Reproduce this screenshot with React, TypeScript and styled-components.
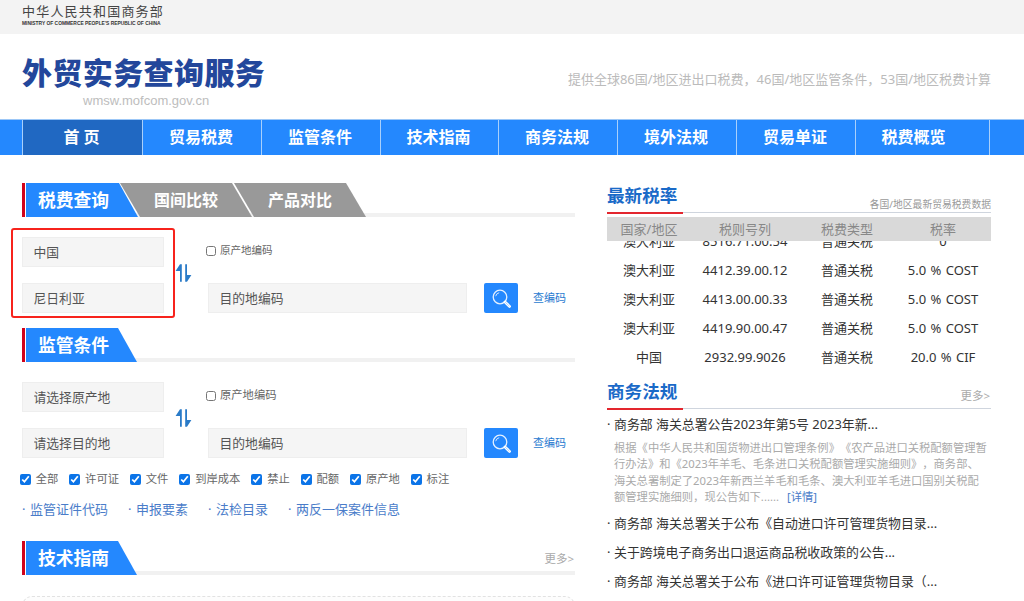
import styled, { createGlobalStyle } from 'styled-components'

const GlobalStyle = createGlobalStyle`
  html, body {
    margin: 0;
    padding: 0;
    height: 601px;
    overflow: hidden;
    background: #fff;
    font-family: "Noto Sans", "Noto Sans CJK SC", sans-serif;
    color: #333;
  }
  * { box-sizing: border-box; }
`

const navItems = [
  { label: '首 页', width: 120 },
  { label: '贸易税费', width: 119 },
  { label: '监管条件', width: 119 },
  { label: '技术指南', width: 118 },
  { label: '商务法规', width: 119 },
  { label: '境外法规', width: 119 },
  { label: '贸易单证', width: 119 },
  { label: '税费概览', width: 135 },
]
const checks = ['全部', '许可证', '文件', '到岸成本', '禁止', '配额', '原产地', '标注']
const links = ['监管证件代码', '申报要素', '法检目录', '两反一保案件信息']
const rates = [
  ['澳大利亚', '8516.71.00.54', '普通关税', '0'],
  ['澳大利亚', '4412.39.00.12', '普通关税', '5.0 % COST'],
  ['澳大利亚', '4413.00.00.33', '普通关税', '5.0 % COST'],
  ['澳大利亚', '4419.90.00.47', '普通关税', '5.0 % COST'],
  ['中国', '2932.99.9026', '普通关税', '20.0 % CIF'],
]
const laws = [
  '商务部 海关总署关于公布《自动进口许可管理货物目录...',
  '关于跨境电子商务出口退运商品税收政策的公告...',
  '商务部 海关总署关于公布《进口许可证管理货物目录（...',
]

function SwapIcon() {
  return (
    <svg width="17" height="18" viewBox="0 0 17 18" fill="none">
      <path d="M5 0.3 H6.8 V17.7 H5 V7 H0.6 Z" fill="#2a7bc8" />
      <path d="M10.2 0.3 H12 V11 H16.4 L12 17.7 H10.2 Z" fill="#2a7bc8" />
    </svg>
  )
}

function SearchIcon() {
  return (
    <svg width="20" height="20" viewBox="0 0 20 20" fill="none">
      <circle cx="9" cy="9" r="6.8" stroke="#e4f0ff" strokeWidth="1.3" />
      <path d="M4.7 8.2 A4.6 4.6 0 0 1 8.2 4.7" stroke="#cfe4ff" strokeWidth="1" />
      <path d="M14 14 L18.6 18.4" stroke="#fff" strokeWidth="2.8" strokeLinecap="round" />
      <path d="M14.4 14.4 L18.2 18" stroke="#8fc2fd" strokeWidth="0.7" strokeLinecap="round" />
    </svg>
  )
}

function QueryForm({ from, to, labelSize }: { from: string; to: string; labelSize: number }) {
  return (
    <Form>
      <Field readOnly value={from} />
      <Swap>
        <SwapIcon />
      </Swap>
      <OriginCode $size={labelSize}>
        <input type="checkbox" />
        原产地编码
      </OriginCode>
      <Field readOnly value={to} />
      <Field readOnly value="目的地编码" />
      <SearchButton>
        <SearchIcon />
      </SearchButton>
      <CodeLink>查编码</CodeLink>
    </Form>
  )
}

export default function App() {
  return (
    <>
      <GlobalStyle />
      <TopBar>
        <Ministry>
          <MinistryCn>中华人民共和国商务部</MinistryCn>
          <MinistryEn>MINISTRY OF COMMERCE PEOPLE'S REPUBLIC OF CHINA</MinistryEn>
        </Ministry>
      </TopBar>
      <Header>
        <Brand>
          <BrandTitle>外贸实务查询服务</BrandTitle>
          <BrandUrl>wmsw.mofcom.gov.cn</BrandUrl>
        </Brand>
        <Slogan>提供全球86国/地区进出口税费，46国/地区监管条件，53国/地区税费计算</Slogan>
      </Header>
      <Nav>
        {navItems.map((item, i) => (
          <NavItem key={item.label} $width={item.width} $active={i === 0} $last={i === navItems.length - 1}>
            {item.label}
          </NavItem>
        ))}
      </Nav>
      <Main>
        <LeftColumn>
          <SectionBar>
            <Mark />
            <PrimaryTab $width={112}>税费查询</PrimaryTab>
            <GreyTab>国间比较</GreyTab>
            <GreyTab>产品对比</GreyTab>
          </SectionBar>
          <FormWrap>
            <QueryForm from="中国" to="尼日利亚" labelSize={10.5} />
            <Highlight />
          </FormWrap>

          <SectionBar $top={15}>
            <Mark />
            <PrimaryTab $width={111}>监管条件</PrimaryTab>
          </SectionBar>
          <FormWrap>
            <QueryForm from="请选择原产地" to="请选择目的地" labelSize={11.3} />
          </FormWrap>
          <CheckRow>
            {checks.map((c) => (
              <CheckLabel key={c}>
                <input type="checkbox" defaultChecked />
                {c}
              </CheckLabel>
            ))}
          </CheckRow>
          <LinkRow>
            {links.map((l) => (
              <QuickLink key={l}>{l}</QuickLink>
            ))}
          </LinkRow>

          <SectionBar $top={23}>
            <Mark />
            <PrimaryTab $width={111}>技术指南</PrimaryTab>
            <MoreLink $lift={9}>更多&gt;</MoreLink>
          </SectionBar>
          <GuideCard />
        </LeftColumn>

        <RightColumn>
          <PanelHead>
            <PanelTitle>最新税率</PanelTitle>
            <PanelNote>各国/地区最新贸易税费数据</PanelNote>
          </PanelHead>
          <RateHead>
            <span>国家/地区</span>
            <span>税则号列</span>
            <span>税费类型</span>
            <span>税率</span>
          </RateHead>
          <RateViewport>
            <RateList>
              {rates.map((r) => (
                <RateRow key={r[1]}>
                  {r.map((cell) => (
                    <span key={cell}>{cell}</span>
                  ))}
                </RateRow>
              ))}
            </RateList>
          </RateViewport>

          <PanelHead $top={7}>
            <PanelTitle>商务法规</PanelTitle>
            <MoreLink $lift={5}>更多&gt;</MoreLink>
          </PanelHead>
          <LawList>
            <LawItem>商务部 海关总署公告2023年第5号 2023年新...</LawItem>
            <LawSummary>
              根据《中华人民共和国货物进出口管理条例》《农产品进口关税配额管理暂行办法》和《2023年羊毛、毛条进口关税配额管理实施细则》，商务部、海关总署制定了2023年新西兰羊毛和毛条、澳大利亚羊毛进口国别关税配额管理实施细则，现公告如下......
              <DetailLink>[详情]</DetailLink>
            </LawSummary>
            {laws.map((l) => (
              <LawItem key={l}>{l}</LawItem>
            ))}
          </LawList>
        </RightColumn>
      </Main>
    </>
  )
}

const TopBar = styled.div`
  height: 34px;
  background: #f3f3f3;
  padding-left: 22px;
`

const Ministry = styled.div`
  display: flex;
  flex-direction: column;
  padding-top: 3px;
`

const MinistryCn = styled.div`
  font-size: 13px;
  line-height: 16px;
  letter-spacing: 1.2px;
  color: #444;
`

const MinistryEn = styled.div`
  font-family: "Liberation Sans", sans-serif;
  font-size: 4.9px;
  line-height: 7px;
  margin-top: 1px;
  font-weight: 700;
  color: #333;
  white-space: nowrap;
`

const Header = styled.div`
  height: 85px;
  padding: 0 33px 0 22px;
  display: flex;
  justify-content: space-between;
`

const Brand = styled.div`
  display: flex;
  flex-direction: column;
  padding-top: 17px;
`

const BrandTitle = styled.div`
  font-size: 30px;
  line-height: 44px;
  font-weight: 900;
  color: #23479b;
  white-space: nowrap;
  letter-spacing: 0.4px;
`

const BrandUrl = styled.div`
  font-family: "Liberation Sans", sans-serif;
  font-size: 13px;
  line-height: 16px;
  margin-top: -2px;
  color: #bdbdbd;
  margin-left: 61px;
`

const Slogan = styled.div`
  padding-top: 33px;
  font-size: 13px;
  line-height: 24px;
  color: #bbb;
  white-space: nowrap;
`

const Nav = styled.nav`
  height: 36px;
  background: #2488fe;
  border-top: 1px solid #9cc7f7;
  padding-left: 22px;
  display: flex;
`

const NavItem = styled.a<{ $width: number; $active?: boolean; $last?: boolean }>`
  width: ${(p) => p.$width}px;
  padding-right: ${(p) => (p.$last ? 18 : 2)}px;
  border-left: 1px solid #a9d0fb;
  ${(p) => p.$last && 'border-right: 1px solid #a9d0fb;'}
  background: ${(p) => (p.$active ? '#2068c2' : 'transparent')};
  color: #fff;
  font-size: 16px;
  font-weight: 700;
  line-height: 35px;
  text-align: center;
  white-space: nowrap;
`

const Main = styled.main`
  display: flex;
  gap: 32px;
  padding: 28px 0 0 22px;
`

const LeftColumn = styled.div`
  width: 553px;
`

const RightColumn = styled.div`
  width: 384px;
`

const SectionBar = styled.div<{ $top?: number }>`
  position: relative;
  display: flex;
  height: 34px;
  margin-top: ${(p) => p.$top ?? 0}px;
  background: linear-gradient(#f1f1f1, #f1f1f1) bottom / 100% 4px no-repeat;
`

const Mark = styled.div`
  width: 4px;
  border-left: 3px solid #d0021b;
  border-right: 1px solid #fff;
`

const PrimaryTab = styled.div<{ $width: number }>`
  position: relative;
  z-index: 1;
  width: ${(p) => p.$width}px;
  padding-left: 12px;
  background: #2488fe;
  clip-path: polygon(0 0, calc(100% - 19px) 0, 100% 100%, 0 100%);
  color: #fff;
  font-size: 17.8px;
  font-weight: 700;
  line-height: 34px;
  white-space: nowrap;
`

const GreyTab = styled.div`
  width: 132px;
  margin-left: -18px;
  background: #999;
  clip-path: polygon(0 0, calc(100% - 20px) 0, 100% 100%, 20px 100%);
  color: #fff;
  font-size: 16px;
  font-weight: 700;
  line-height: 34px;
  text-align: center;
  white-space: nowrap;
`

const FormWrap = styled.div`
  position: relative;
  margin-top: 20px;
`

const Highlight = styled.div`
  position: absolute;
  left: -11px;
  top: -9px;
  width: 164px;
  height: 90px;
  border: 2px solid #f7231c;
  border-radius: 3px;
  pointer-events: none;
`

const Form = styled.div`
  display: grid;
  grid-template-columns: 142px 44px 259px 17px 34px 15px auto;
  grid-template-rows: 30px 30px;
  row-gap: 16px;
  align-items: stretch;
`

const Field = styled.input`
  display: block;
  width: 100%;
  min-width: 0;
  height: 30px;
  padding: 0 0 1px 10.5px;
  border: 1px solid #eee;
  background: #f5f5f5;
  color: #555;
  font: 12.8px "Noto Sans", "Noto Sans CJK SC", sans-serif;
  outline: none;
`

const Swap = styled.div`
  grid-row: 1 / span 2;
  grid-column: 2;
  display: flex;
  align-items: center;
  padding: 0 0 5px 11px;
`

const OriginCode = styled.label<{ $size: number }>`
  grid-column: 3 / span 5;
  display: flex;
  align-items: flex-start;
  gap: 4px;
  margin-left: -2px;
  padding-top: 7px;
  font-size: ${(p) => p.$size}px;
  line-height: 12px;
  color: #666;
  input {
    width: 10px;
    height: 10px;
    margin: 2px 0 0;
  }
`

const SearchButton = styled.button`
  grid-column: 5;
  width: 34px;
  height: 30px;
  padding: 0;
  border: none;
  border-radius: 2px;
  background: #2488fe;
  display: flex;
  align-items: center;
  justify-content: center;
`

const CodeLink = styled.a`
  grid-column: 7;
  font-size: 11px;
  line-height: 30px;
  color: #2a7bd0;
  white-space: nowrap;
`

const CheckRow = styled.div`
  display: flex;
  gap: 11.1px;
  height: 14px;
  margin: 14px 0 0 -2px;
`

const CheckLabel = styled.label`
  display: flex;
  align-items: center;
  gap: 4.7px;
  font-size: 11.3px;
  line-height: 14px;
  color: #666;
  white-space: nowrap;
  input {
    width: 11px;
    height: 11px;
    margin: 0;
    accent-color: #0b74e8;
  }
`

const LinkRow = styled.div`
  display: flex;
  gap: 20px;
  height: 18px;
  margin-top: 14px;
`

const QuickLink = styled.a`
  font-size: 13px;
  line-height: 18px;
  color: #4a7cc9;
  white-space: nowrap;
  &::before {
    content: '·';
    display: inline-block;
    width: 8px;
  }
`

const MoreLink = styled.a<{ $lift: number }>`
  margin-left: auto;
  margin-right: 1px;
  align-self: flex-end;
  padding-bottom: ${(p) => p.$lift}px;
  font-size: 11.5px;
  line-height: 14px;
  color: #aaa;
  white-space: nowrap;
`

const GuideCard = styled.div`
  height: 60px;
  margin-top: 21px;
  border: 1px dashed #e2e2e2;
  border-radius: 10px 10px 0 0;
  background: #fdfdfd;
`

const PanelHead = styled.div<{ $top?: number }>`
  display: flex;
  height: 30px;
  margin-top: ${(p) => p.$top ?? 0}px;
  border-bottom: 1px solid #cfd5de;
`

const PanelTitle = styled.h2`
  width: 76px;
  height: 31px;
  margin: 0;
  border-bottom: 2px solid #e3262e;
  font-size: 17.6px;
  font-weight: 700;
  line-height: 24px;
  color: #1a6ac8;
  white-space: nowrap;
`

const PanelNote = styled.span`
  margin-left: auto;
  align-self: flex-end;
  font-size: 9.8px;
  line-height: 14px;
  color: #999;
  white-space: nowrap;
`

const rateColumns = '84px 108px 96px 96px'

const RateHead = styled.div`
  display: grid;
  grid-template-columns: ${rateColumns};
  height: 24px;
  margin-top: 4px;
  background: #d9d9d9;
  font-size: 13px;
  line-height: 24px;
  color: #888;
  text-align: center;
`

const RateViewport = styled.div`
  height: 131px;
  overflow: hidden;
`

const RateList = styled.div`
  margin-top: -14.5px;
`

const RateRow = styled.div`
  display: grid;
  grid-template-columns: ${rateColumns};
  height: 29px;
  font-size: 13px;
  line-height: 29px;
  word-spacing: 1px;
  color: #333;
  text-align: center;
  white-space: nowrap;
`

const LawList = styled.div`
  padding-top: 1px;
`

const LawItem = styled.div`
  height: 29px;
  font-size: 12.9px;
  line-height: 29px;
  color: #333;
  white-space: nowrap;
  &::before {
    content: '·';
    display: inline-block;
    width: 7px;
  }
`

const LawSummary = styled.p`
  margin: 1px 0 4px;
  padding: 0 2px 0 7px;
  font-size: 11.3px;
  line-height: 16.3px;
  color: #aaa;
  text-spacing-trim: space-all;
`

const DetailLink = styled.a`
  margin-left: 8px;
  color: #4a7cc9;
`
